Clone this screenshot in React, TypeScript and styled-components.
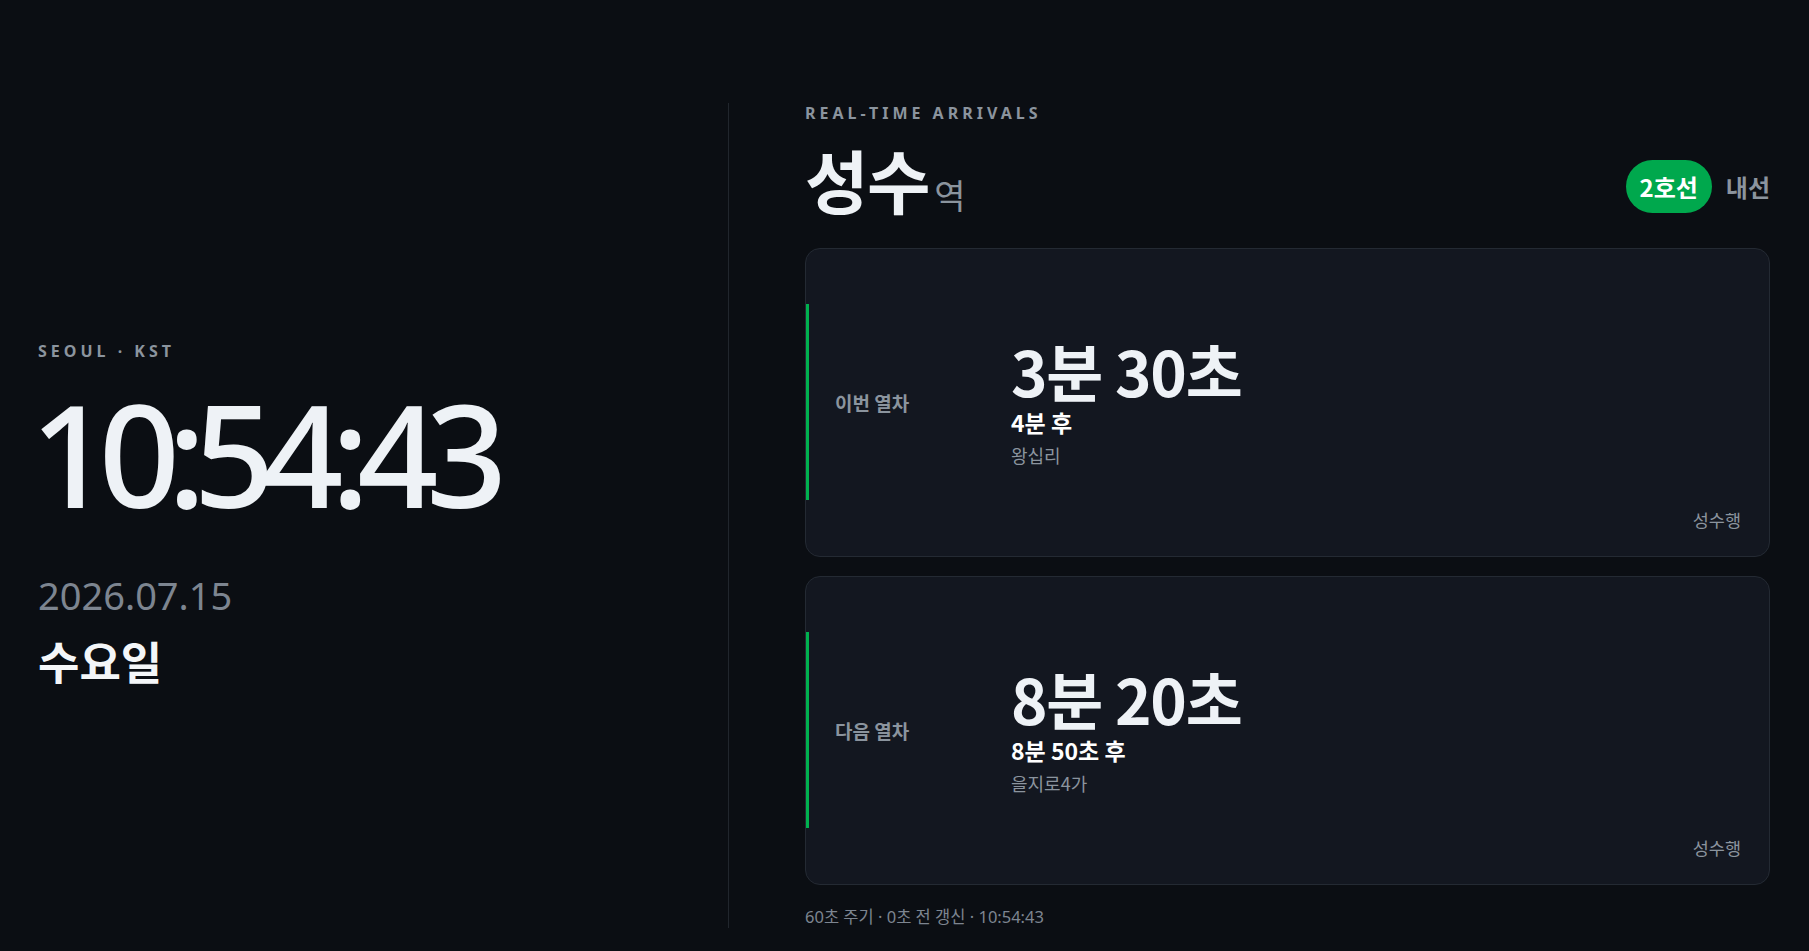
import React from "react";
import styled, { createGlobalStyle } from "styled-components";

const GlobalStyle = createGlobalStyle`
  html, body { margin: 0; padding: 0; background: #0b0e13; }
  body {
    font-family: "Noto Sans", "Noto Sans CJK KR", sans-serif;
    color: #eef2f6;
  }
  * { box-sizing: border-box; }
`;

const Page = styled.div`
  min-height: 951px;
  display: grid;
  grid-template-columns: 690px 1fr;
  padding: 103px 39px 23px 38px;
  background: #0b0e13;
`;

const ClockPanel = styled.section`
  display: flex;
  flex-direction: column;
  justify-content: center;
`;

const Eyebrow = styled.div`
  font-size: 16px;
  font-weight: 700;
  letter-spacing: 0.25em;
  color: #8b949e;
  line-height: 20px;
`;

const Clock = styled.div`
  font-size: 142px;
  font-weight: 500;
  letter-spacing: -0.088em;
  line-height: 1;
  color: #eef2f6;
  margin: 21px 0 0 -8px;
`;

const DateText = styled.div`
  font-size: 38px;
  font-weight: 400;
  color: #7d8590;
  line-height: 1.2;
  margin-top: 49px;
`;

const Weekday = styled.div`
  font-family: "Noto Sans CJK KR", "Noto Sans", sans-serif;
  font-size: 45px;
  font-weight: 700;
  color: #f4f6f8;
  line-height: 1.3;
  margin-top: 13px;
`;

const ArrivalPanel = styled.section`
  border-left: 1px solid #21262d;
  padding-left: 76px;
  display: flex;
  flex-direction: column;
`;

const TitleRow = styled.div`
  display: flex;
  align-items: center;
  justify-content: space-between;
  margin-top: 15px;
  margin-bottom: 27px;
`;

const StationName = styled.h1`
  margin: 0;
  font-family: "Noto Sans CJK KR", sans-serif;
  font-size: 69px;
  font-weight: 700;
  line-height: 1.2;
  color: #eef2f6;
  display: flex;
  align-items: baseline;
  letter-spacing: -0.02em;
`;

const StationSuffix = styled.span`
  font-size: 34px;
  font-weight: 400;
  color: #8b949e;
  margin-left: 5px;
  letter-spacing: 0;
`;

const LineInfo = styled.div`
  display: flex;
  align-items: center;
  gap: 14px;
  margin-top: 15px;
  font-family: "Noto Sans CJK KR", sans-serif;
`;

const LineBadge = styled.span`
  display: inline-flex;
  align-items: center;
  justify-content: center;
  height: 53px;
  padding: 0 14px;
  border-radius: 27px;
  background: #00a84d;
  color: #ffffff;
  font-size: 24px;
  font-weight: 700;
`;

const Direction = styled.span`
  font-size: 24px;
  font-weight: 700;
  color: #8b949e;
`;

const CardList = styled.div`
  display: flex;
  flex-direction: column;
  gap: 19px;
`;

const Card = styled.article`
  position: relative;
  height: 309px;
  display: flex;
  align-items: center;
  background: #131720;
  border: 1px solid #242a33;
  border-radius: 15px;
`;

const TrainRow = styled.div`
  display: flex;
  align-items: center;
  height: 196px;
  width: 100%;
  border-left: 3px solid #00b14f;
`;

const TrainLabel = styled.div`
  width: 202px;
  padding-left: 26px;
  font-family: "Noto Sans CJK KR", sans-serif;
  font-size: 19px;
  font-weight: 700;
  color: #8b949e;
`;

const TrainInfo = styled.div`
  display: flex;
  flex-direction: column;
  font-family: "Noto Sans CJK KR", sans-serif;
`;

const Countdown = styled.div`
  font-size: 62px;
  font-weight: 700;
  line-height: 1.1;
  letter-spacing: -0.02em;
  color: #eef2f6;
`;

const ArrivalAt = styled.div`
  font-size: 23px;
  font-weight: 700;
  line-height: 1.3;
  margin-top: 4px;
  color: #ffffff;
`;

const Position = styled.div`
  font-size: 18px;
  font-weight: 400;
  line-height: 1.5;
  margin-top: 4px;
  color: #8b949e;
`;

const Destination = styled.span`
  position: absolute;
  right: 28px;
  bottom: 24px;
  font-family: "Noto Sans CJK KR", sans-serif;
  font-size: 17.5px;
  color: #8b949e;
`;

const Footer = styled.div`
  margin-top: 19px;
  font-size: 16.5px;
  color: #7d8590;
`;

type Train = {
  label: string;
  countdown: string;
  arrival: string;
  position: string;
  destination: string;
};

const trains: Train[] = [
  { label: "이번 열차", countdown: "3분 30초", arrival: "4분 후", position: "왕십리", destination: "성수행" },
  { label: "다음 열차", countdown: "8분 20초", arrival: "8분 50초 후", position: "을지로4가", destination: "성수행" },
];

export default function App() {
  return (
    <>
      <GlobalStyle />
      <Page>
        <ClockPanel>
          <Eyebrow>SEOUL · KST</Eyebrow>
          <Clock>10:54:43</Clock>
          <DateText>2026.07.15</DateText>
          <Weekday>수요일</Weekday>
        </ClockPanel>
        <ArrivalPanel>
          <Eyebrow>REAL-TIME ARRIVALS</Eyebrow>
          <TitleRow>
            <StationName>
              성수<StationSuffix>역</StationSuffix>
            </StationName>
            <LineInfo>
              <LineBadge>2호선</LineBadge>
              <Direction>내선</Direction>
            </LineInfo>
          </TitleRow>
          <CardList>
            {trains.map((t) => (
              <Card key={t.label}>
                <TrainRow>
                  <TrainLabel>{t.label}</TrainLabel>
                  <TrainInfo>
                    <Countdown>{t.countdown}</Countdown>
                    <ArrivalAt>{t.arrival}</ArrivalAt>
                    <Position>{t.position}</Position>
                  </TrainInfo>
                </TrainRow>
                <Destination>{t.destination}</Destination>
              </Card>
            ))}
          </CardList>
          <Footer>60초 주기 · 0초 전 갱신 · 10:54:43</Footer>
        </ArrivalPanel>
      </Page>
    </>
  );
}
